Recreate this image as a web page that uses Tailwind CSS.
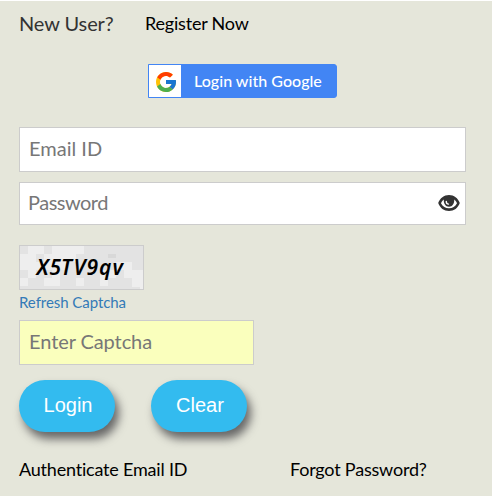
<!DOCTYPE html>
<html lang="en">
  <head>
    <meta charset="UTF-8" />
    <title>Login</title>
    <script src="https://cdn.jsdelivr.net/npm/@tailwindcss/browser@4"></script>
  </head>
  <body class="bg-[#e5e6da] font-['Lato',sans-serif] text-black">
    <div class="w-[492px] h-[496px] overflow-hidden border-t border-white pl-[19px] pr-[26px]">

      <!-- Register -->
      <div class="flex h-[46px] items-center whitespace-nowrap pb-0.5">
        <span class="w-[126px] text-[20px] text-[#333] tracking-[-0.1px]">New User?</span>
        <a href="#" class="text-[18px] tracking-[-0.2px]">Register Now</a>
      </div>

      <!-- Google login -->
      <a href="#" class="mt-[17px] ml-[129px] flex h-[34px] w-[189px] items-center rounded-r-[3px] border border-[#4285f4] bg-[#4285f4] whitespace-nowrap">
        <span class="flex h-8 w-8 items-center justify-center bg-white">
          <svg class="mt-0.5 ml-0.5 h-5 w-5" viewBox="4 4 40 40">
            <path fill="#ffc107" d="M43.600 20H24v8h11.300C33.700 32.700 29.200 36 24 36c-6.600 0-12-5.400-12-12s5.400-12 12-12c3.100 0 5.800 1.200 8 3l5.700-5.700C34 6.100 29.300 4 24 4 13 4 4 13 4 24s9 20 20 20 20-9 20-20c0-1.300-.1-2.700-.4-4z" />
            <path fill="#ff3d00" d="M6.300 14.700l6.600 4.800C14.700 15.100 19 12 24 12c3.100 0 5.800 1.200 8 3l5.700-5.700C34 6.100 29.300 4 24 4 16.300 4 9.700 8.300 6.300 14.700z" />
            <path fill="#4caf50" d="M24 44c5.200 0 9.900-2 13.400-5.200l-6.200-5.200C29.200 35.100 26.700 36 24 36c-5.200 0-9.600-3.300-11.300-7.900l-6.500 5C9.500 39.600 16.200 44 24 44z" />
            <path fill="#1976d2" d="M43.600 20H24v8h11.300c-.8 2.200-2.200 4.200-4.100 5.600l6.200 5.200C37 39.200 44 34 44 24c0-1.300-.1-2.700-.4-4z" />
          </svg>
        </span>
        <span class="ml-[13px] text-[16px] font-medium tracking-[0.03px] text-white">Login with Google</span>
      </a>

      <form>
        <input type="text" placeholder="Email ID" class="mt-[29px] block h-[45px] w-[447px] border border-[#ccc] bg-white px-[9px] pb-[3px] text-[20px] placeholder:text-[#777]" />
        <div class="mt-[10px] flex h-[43px] w-[447px] items-center border border-[#ccc] bg-white pr-[5px] pl-2">
          <input type="password" placeholder="Password" class="min-w-0 flex-1 pb-[3px] text-[20px] tracking-[-0.5px] placeholder:text-[#777]" />
          <svg class="mb-px h-[18px] w-[22px]" viewBox="0 0 22 18">
            <path fill="#333" fill-rule="evenodd" d="M.2 9C2 4 6 1 11 1s9 3 10.800 8c-1.800 5-5.800 8-10.800 8S2 14 .2 9zM3 9.200c1.700 3.600 4.500 5 8 5s6.300-1.400 8-5c-.8-1.700-1.700-2.800-2.800-3.600C16.500 9.600 14.500 12.800 11 12.800S5.500 9.600 5.800 5.600C4.700 6.400 3.800 7.500 3 9.200z" />
            <path fill="none" stroke="#fff" stroke-width="1.400" stroke-linecap="round" d="M8.300 7.500c0 1.700.8 2.600 2.200 2.600" />
          </svg>
        </div>

        <!-- Captcha -->
        <div class="mt-5 h-[45px] w-[125px] border border-[#ccc]">
          <svg class="block" width="123" height="43" viewBox="0 0 123 43">
            <rect width="123" height="43" fill="#e3e3e3" />
            <path fill="#eee" d="M8 0h16v8H8zM32 0h32v8H56v8h-8v8h-8v8h-8v-8H16v8H8v-8H0v-8h8V8h8v8h8V8h8zM0 8h8v8H0zM0 32h8v8H0zM24 32h16v8H24zM56 32h8v8h-8zM80 24h16v8h-8v8h-8zM104 16h8v8h11v19h-3v-2h-8v-9h-8v-8h-8v-8z" />
            <path fill="#d8d8d8" d="M88 8h8v4h-8z" />
            <text x="16.500 29.500 41 53.500 66.500 79 92.500" y="29" class="fill-black font-['Noto_Sans',sans-serif] text-[21px] font-semibold italic">X5TV9qv</text>
          </svg>
        </div>
        <a href="#" class="flex h-[23px] items-center pt-px text-[15px] tracking-[-0.06px] text-[#337ab7]">Refresh Captcha</a>
        <input type="text" placeholder="Enter Captcha" class="mt-[7px] block h-[45px] w-[235px] border border-[#ccc] bg-[#faffbd] px-[9px] pb-[3px] text-[20px] tracking-[-0.08px] placeholder:text-[#777]" />

        <div class="mt-[15px] flex gap-9 font-['Liberation_Sans',sans-serif] text-[20px] text-white">
          <button type="submit" class="h-[52px] w-24 rounded-[26px] bg-[#33bbef] pb-0.5 pl-0.5 shadow-[4px_7px_10px_#666]">Login</button>
          <button type="reset" class="h-[52px] w-24 rounded-[26px] bg-[#33bbef] pb-0.5 pl-0.5 shadow-[4px_7px_10px_#666]">Clear</button>
        </div>
      </form>

      <div class="mt-[24px] flex whitespace-nowrap text-[18px] tracking-[-0.2px]">
        <a href="#" class="w-[271px]">Authenticate Email ID</a>
        <a href="#">Forgot Password?</a>
      </div>
    </div>
  </body>
</html>
